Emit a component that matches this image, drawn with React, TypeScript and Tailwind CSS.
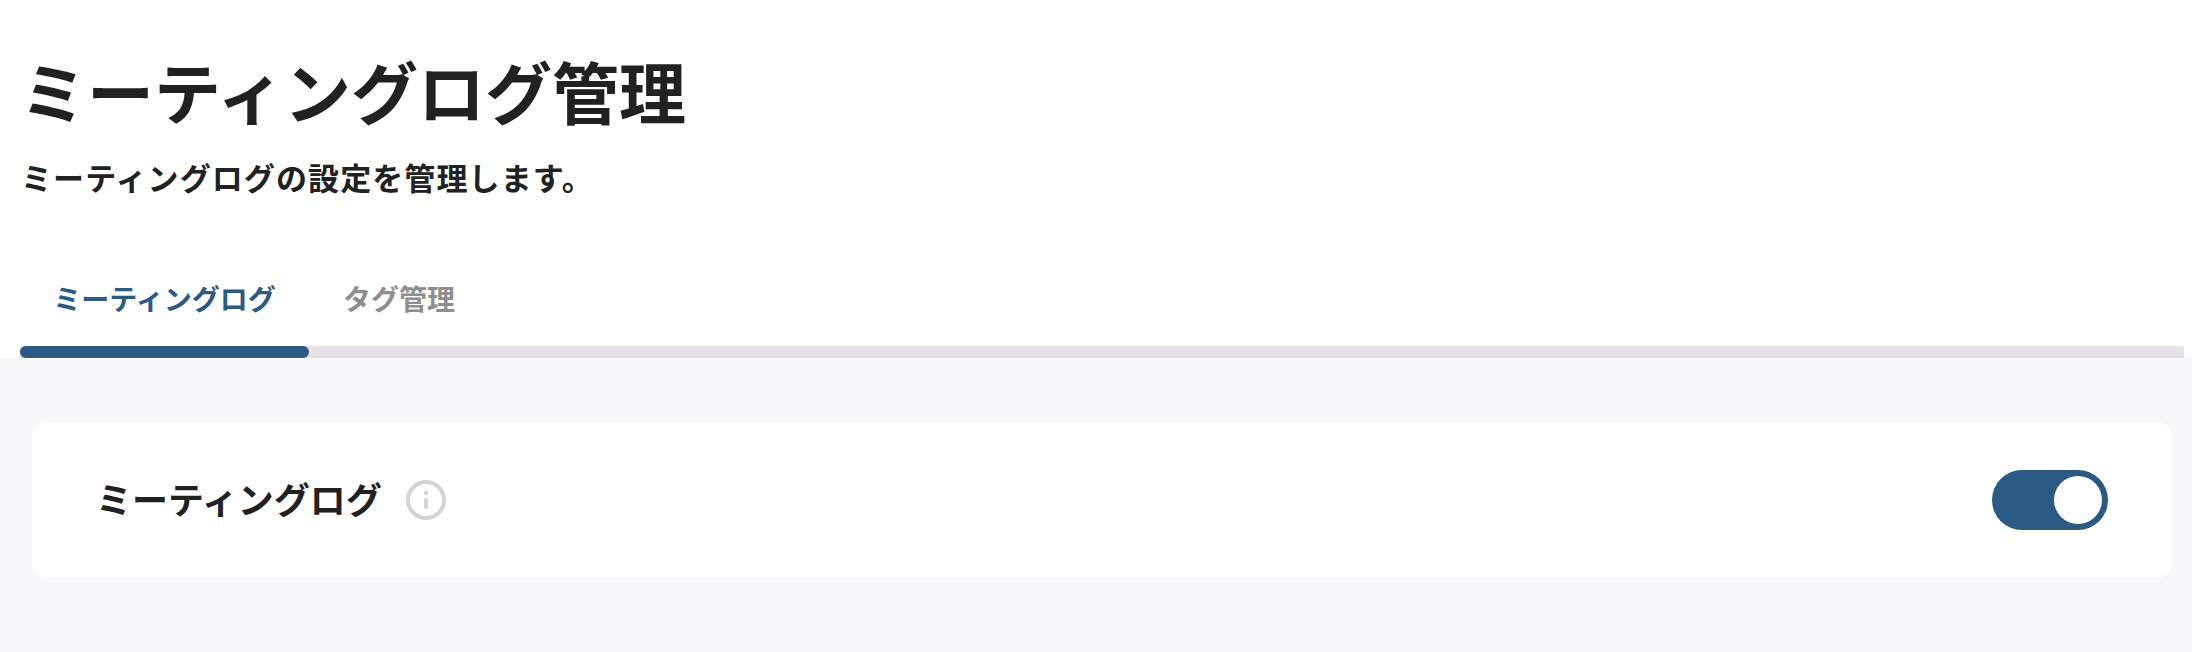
const App = () => {
  return (
    <div className="w-[2192px] h-[652px] overflow-hidden bg-white flex flex-col font-['Noto_Sans_CJK_JP',sans-serif] text-[#212121]">
      <div className="pl-[20px] pt-[44px]">
        <h1 className="text-[67px] leading-[92px] font-bold">ミーティングログ管理</h1>
        <p className="mt-[19px] pl-[1px] text-[31px] leading-[44px] font-bold tracking-[1.1px]">ミーティングログの設定を管理します。</p>
      </div>
      <div className="mt-[55px] pl-[20px] pr-[8px]">
        <div className="flex">
          <div className="w-[289px] h-[92px] pb-[4px] flex items-center justify-center text-[28px] font-bold text-[#2a5a84]">ミーティングログ</div>
          <div className="w-[180px] h-[92px] pb-[4px] flex items-center justify-center text-[28px] font-bold text-[#8e8e8e]">タグ管理</div>
        </div>
        <div className="h-[12px] bg-[#e6e2e8]">
          <div className="w-[289px] h-[12px] rounded-full bg-[#2a5a84]"></div>
        </div>
      </div>
      <div className="flex-1 bg-[#f8f8fa] pt-[64px] pl-[32px] pr-[20px]">
        <div className="h-[156px] rounded-[16px] bg-white pl-[64px] pr-[64px] flex items-center justify-between">
          <div className="flex items-center gap-[24px]">
            <span className="pb-[4px] text-[36px] font-bold">ミーティングログ</span>
            <svg width="40" height="40" viewBox="0 0 40 40" fill="none" className="text-[#d4d4d4]">
              <circle cx="20" cy="20" r="18" stroke="currentColor" strokeWidth="4" />
              <circle cx="20" cy="13" r="2.2" fill="currentColor" />
              <line x1="20" y1="20" x2="20" y2="27" stroke="currentColor" strokeWidth="4" strokeLinecap="round" />
            </svg>
          </div>
          <div className="w-[116px] h-[60px] rounded-full bg-[#2a5a84] flex items-center justify-end pr-[6px]">
            <div className="w-[48px] h-[48px] rounded-full bg-white"></div>
          </div>
        </div>
      </div>
    </div>
  );
};

export default App;
